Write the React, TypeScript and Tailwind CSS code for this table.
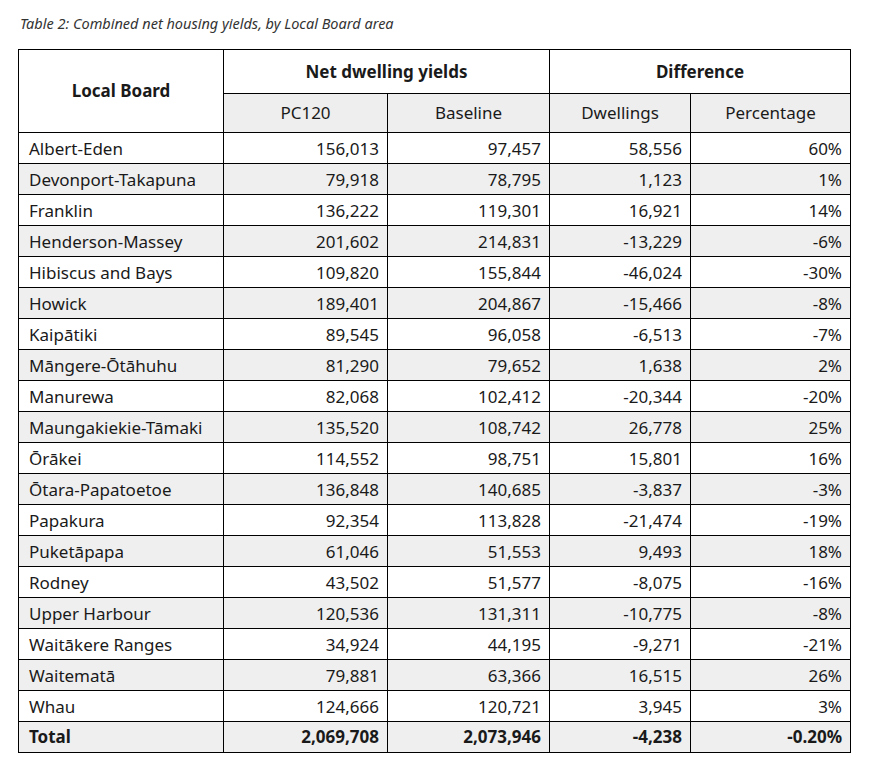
const rows: [string, string, string, string, string][] = [
  ["Albert-Eden", "156,013", "97,457", "58,556", "60%"],
  ["Devonport-Takapuna", "79,918", "78,795", "1,123", "1%"],
  ["Franklin", "136,222", "119,301", "16,921", "14%"],
  ["Henderson-Massey", "201,602", "214,831", "-13,229", "-6%"],
  ["Hibiscus and Bays", "109,820", "155,844", "-46,024", "-30%"],
  ["Howick", "189,401", "204,867", "-15,466", "-8%"],
  ["Kaipātiki", "89,545", "96,058", "-6,513", "-7%"],
  ["Māngere-Ōtāhuhu", "81,290", "79,652", "1,638", "2%"],
  ["Manurewa", "82,068", "102,412", "-20,344", "-20%"],
  ["Maungakiekie-Tāmaki", "135,520", "108,742", "26,778", "25%"],
  ["Ōrākei", "114,552", "98,751", "15,801", "16%"],
  ["Ōtara-Papatoetoe", "136,848", "140,685", "-3,837", "-3%"],
  ["Papakura", "92,354", "113,828", "-21,474", "-19%"],
  ["Puketāpapa", "61,046", "51,553", "9,493", "18%"],
  ["Rodney", "43,502", "51,577", "-8,075", "-16%"],
  ["Upper Harbour", "120,536", "131,311", "-10,775", "-8%"],
  ["Waitākere Ranges", "34,924", "44,195", "-9,271", "-21%"],
  ["Waitematā", "79,881", "63,366", "16,515", "26%"],
  ["Whau", "124,666", "120,721", "3,945", "3%"],
];

export default function App() {
  return (
    <div className="min-h-screen bg-white text-[#1a1a1a] font-['Noto_Sans',sans-serif]">
      <p className="pl-[20px] pt-[13px] h-[49px] text-[14.5px] leading-[20px] italic text-[#333]">
        Table 2: Combined net housing yields, by Local Board area
      </p>
      <table className="ml-[18px] w-[832px] table-fixed border-collapse border border-black text-[17px] leading-[22px]">
        <colgroup>
          <col className="w-[205px]" />
          <col className="w-[164px]" />
          <col className="w-[162px]" />
          <col className="w-[141px]" />
          <col className="w-[160px]" />
        </colgroup>
        <thead>
          <tr className="h-[44px]">
            <th rowSpan={2} className="border border-black font-bold">Local Board</th>
            <th colSpan={2} className="border border-black font-bold">Net dwelling yields</th>
            <th colSpan={2} className="border border-black font-bold">Difference</th>
          </tr>
          <tr className="h-[39px] bg-[#eeeeee]">
            <th className="border border-black font-normal">PC120</th>
            <th className="border border-black font-normal">Baseline</th>
            <th className="border border-black font-normal">Dwellings</th>
            <th className="border border-black font-normal">Percentage</th>
          </tr>
        </thead>
        <tbody>
          {rows.map((r, i) => (
            <tr key={r[0]} className={"h-[31px] " + (i % 2 === 1 ? "bg-[#efefef]" : "bg-white")}>
              <td className="border border-black pl-[10px] pt-[2px]">{r[0]}</td>
              <td className="border border-black pr-[8px] pt-[2px] text-right">{r[1]}</td>
              <td className="border border-black pr-[8px] pt-[2px] text-right">{r[2]}</td>
              <td className="border border-black pr-[8px] pt-[2px] text-right">{r[3]}</td>
              <td className="border border-black pr-[8px] pt-[2px] text-right">{r[4]}</td>
            </tr>
          ))}
          <tr className="h-[31px] bg-[#efefef] font-bold">
            <td className="border border-black pl-[10px]">Total</td>
            <td className="border border-black pr-[8px] text-right">2,069,708</td>
            <td className="border border-black pr-[8px] text-right">2,073,946</td>
            <td className="border border-black pr-[8px] text-right">-4,238</td>
            <td className="border border-black pr-[8px] text-right">-0.20%</td>
          </tr>
        </tbody>
      </table>
    </div>
  );
}
